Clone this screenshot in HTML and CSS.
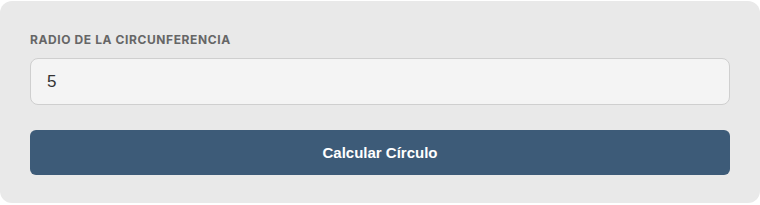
FILE: index.html
```html
<!DOCTYPE html>
<html lang="es">
<head>
    <meta charset="UTF-8">
    <meta name="viewport" content="width=device-width, initial-scale=1.0">
    <title>Calculadora de Círculo</title>
    <link rel="stylesheet" href="styles.css">
</head>
<body>

    <div class="circle-card">
        <label class="circle-label" for="radio">Radio de la circunferencia</label>
        <input class="circle-input" id="radio" type="text" value="5">
        <button class="circle-button" type="button">Calcular Círculo</button>
    </div>

</body>
</html>
```

FILE: styles.css
```css
body {
    margin: 0;
    background: #ffffff;
}

/* Tarjeta */
.circle-card {
    display: flex;
    flex-direction: column;
    margin-top: 1px;
    padding: 31px 30px 28px;
    height: 202px;
    box-sizing: border-box;
    background: #e9e9e9;
    border-radius: 12px;
    font-family: "Inter", "Liberation Sans", sans-serif;
}

/* Etiqueta */
.circle-label {
    font-size: 12px;
    line-height: 16px;
    font-weight: 700;
    letter-spacing: 0.6px;
    text-transform: uppercase;
    color: #666;
    margin-bottom: 10px;
}

/* Campo */
.circle-input {
    height: 47px;
    box-sizing: border-box;
    padding: 0 16px;
    border: 1px solid #cfcfcf;
    border-radius: 8px;
    background: #f4f4f4;
    font-family: "Liberation Sans", Arial, sans-serif;
    font-size: 17px;
    color: #333;
    outline: none;
}

/* Botón */
.circle-button {
    margin-top: 25px;
    height: 45px;
    border: none;
    border-radius: 6px;
    background: #3d5b78;
    color: #fff;
    font-family: "Liberation Sans", Arial, sans-serif;
    font-size: 15px;
    font-weight: 700;
    cursor: pointer;
}
```
